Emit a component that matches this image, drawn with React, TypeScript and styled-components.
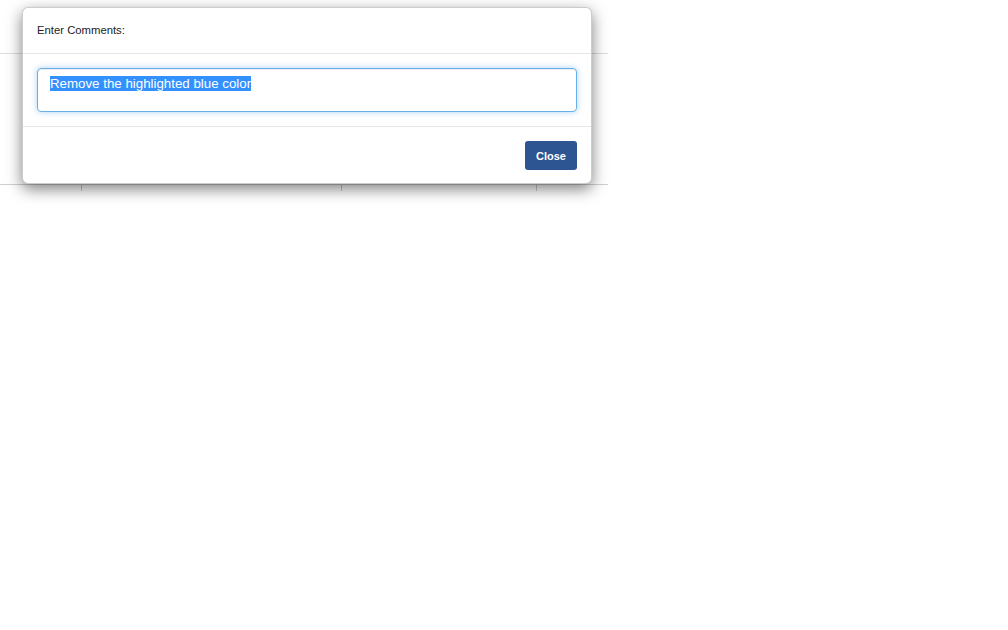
import React from 'react';
import styled, { createGlobalStyle } from 'styled-components';

const GlobalStyle = createGlobalStyle`
  html, body {
    margin: 0;
    background: #fff;
    font-family: 'Liberation Sans', Arial, sans-serif;
  }
`;

const Page = styled.div`
  position: relative;
  width: 1008px;
  height: 630px;
`;

// the grid that sits behind the dialog
const Grid = styled.div`
  width: 608px;
`;

const GridRow = styled.div<{ $height: number; $line?: string }>`
  height: ${(p) => p.$height}px;
  border-bottom: ${(p) => (p.$line ? `1px solid ${p.$line}` : 'none')};
  display: grid;
  grid-template-columns: 81px 260px 195px 1fr;
`;

const Cell = styled.div`
  & + & {
    border-left: 1px solid #c8c8c8;
  }
`;

const Modal = styled.div`
  position: absolute;
  left: 22px;
  top: 7px;
  width: 568px;
  background: #fff;
  border: 1px solid rgba(0, 0, 0, 0.2);
  border-radius: 6px;
  box-shadow: 0 5px 15px rgba(0, 0, 0, 0.5);
`;

const Header = styled.div`
  padding: 15px 14px 15px;
  height: 15px;
  border-bottom: 1px solid #e5e5e5;
  font-size: 11.3px;
  line-height: 15px;
  color: #222;
`;

const Body = styled.div`
  padding: 14px 14px 14px;
  border-bottom: 1px solid #e5e5e5;
`;

const CommentBox = styled.div`
  height: 27px;
  padding: 7px 12px 8px;
  border: 1px solid #66afe9;
  border-radius: 4px;
  box-shadow: inset 0 1px 1px rgba(0, 0, 0, 0.075), 0 0 6px rgba(102, 175, 233, 0.55);
  font-size: 13.3px;
  line-height: 16px;
  color: #555;
`;

const Selected = styled.span`
  background: #3390ff;
  color: #fff;
`;

const Footer = styled.div`
  padding: 14px 14px 13px;
  display: flex;
  justify-content: flex-end;
`;

const Button = styled.button`
  width: 52px;
  height: 29px;
  border: none;
  border-radius: 3px;
  background: #2d5592;
  color: #fff;
  font-family: 'Liberation Sans', Arial, sans-serif;
  font-size: 11px;
  font-weight: bold;
  padding: 0;
  cursor: pointer;
`;

const App = (): JSX.Element => {
  return (
    <Page>
      <GlobalStyle />
      <Grid>
        <GridRow $height={53} $line="#dedede" />
        <GridRow $height={130} $line="#cfcfcf" />
        <GridRow $height={6}>
          <Cell />
          <Cell />
          <Cell />
          <Cell />
        </GridRow>
      </Grid>
      <Modal>
        <Header>Enter Comments:</Header>
        <Body>
          <CommentBox>
            <Selected>Remove the highlighted blue color</Selected>
          </CommentBox>
        </Body>
        <Footer>
          <Button>Close</Button>
        </Footer>
      </Modal>
    </Page>
  );
};

export default App;
